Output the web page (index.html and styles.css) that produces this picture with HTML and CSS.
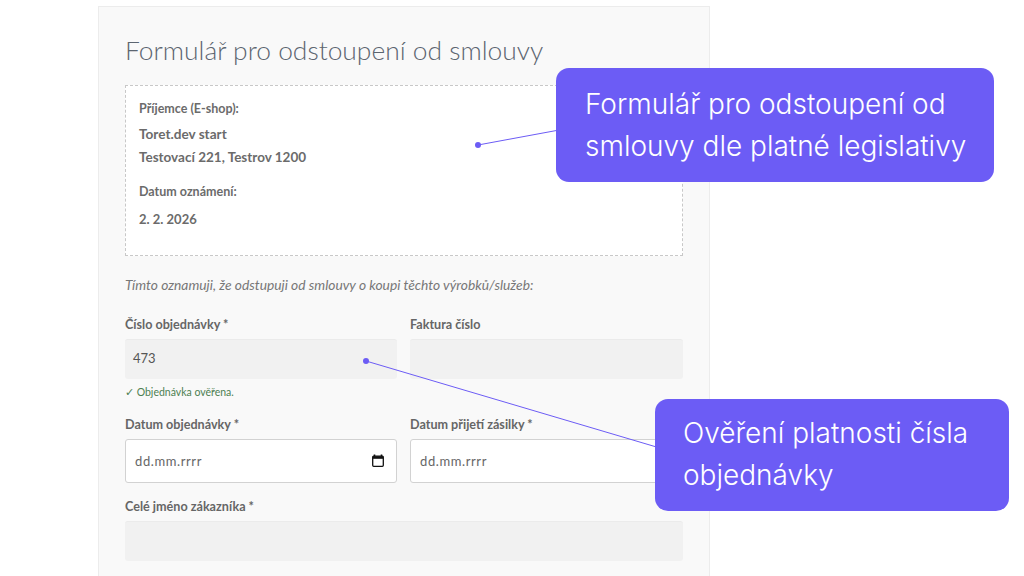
FILE: index.html
```html
<!DOCTYPE html>
<html lang="cs">
<head>
    <title>Formulář pro odstoupení od smlouvy</title>
    <meta charset="UTF-8">
    <link rel="stylesheet" href="styles.css">
</head>
<body>
<div class="form-card">
    <h1>Formulář pro odstoupení od smlouvy</h1>

    <!-- Příjemce -->
    <div class="recipient">
        <p class="recipient-label">Příjemce (E-shop):</p>
        <p class="recipient-name">Toret.dev start</p>
        <p class="recipient-address">Testovací 221, Testrov 1200</p>
        <p class="recipient-label date-label">Datum oznámení:</p>
        <p class="recipient-date">2. 2. 2026</p>
    </div>

    <p class="intro">Tímto oznamuji, že odstupuji od smlouvy o koupi těchto výrobků/služeb:</p>

    <!-- Pole formuláře -->
    <div class="form-row">
        <div class="field">
            <label>Číslo objednávky *</label>
            <div class="input readonly">473</div>
            <div class="verified">✓ Objednávka ověřena.</div>
        </div>
        <div class="field">
            <label>Faktura číslo</label>
            <div class="input readonly"></div>
        </div>
    </div>
    <div class="form-row">
        <div class="field">
            <label>Datum objednávky *</label>
            <div class="input date">
                <span>dd.mm.rrrr</span>
                <svg class="calendar" width="14" height="14" viewBox="0 0 14 14">
                    <path d="M3.5 0.5v2M10.5 0.5v2" stroke="#111" stroke-width="1.6" fill="none"/>
                    <rect x="1.7" y="2.2" width="10.6" height="10.1" rx="1" stroke="#111" stroke-width="1.3" fill="none"/>
                    <rect x="1.7" y="2.2" width="10.6" height="2.6" fill="#111"/>
                </svg>
            </div>
        </div>
        <div class="field">
            <label>Datum přijetí zásilky *</label>
            <div class="input date">
                <span>dd.mm.rrrr</span>
            </div>
        </div>
    </div>
    <div class="field">
        <label>Celé jméno zákazníka *</label>
        <div class="input readonly"></div>
    </div>
</div>

<!-- Popisky přes formulář -->
<svg class="connectors" width="1024" height="576" viewBox="0 0 1024 576">
    <line x1="478" y1="145" x2="570" y2="128" stroke="#6c5cf5" stroke-width="1"/>
    <circle cx="478" cy="145" r="3" fill="#6c5cf5"/>
    <line x1="366" y1="361" x2="670" y2="451" stroke="#6c5cf5" stroke-width="1"/>
    <circle cx="366" cy="361" r="3" fill="#6c5cf5"/>
</svg>
<div class="callout callout-legal">Formulář pro odstoupení od smlouvy dle platné legislativy</div>
<div class="callout callout-order">Ověření platnosti čísla objednávky</div>
</body>
</html>
```

FILE: styles.css
```css
html, body { height: 576px; overflow: hidden; }
body { margin: 0; background: #fff; font-family: "Lato", "Open Sans", sans-serif; color: #6d6d6d; position: relative; }
p { margin: 0; }

.form-card { width: 558px; height: 600px; margin: 6px 0 0 98px; padding: 25px 26px 0; background: #f9f9f9; border: 1px solid #ececec; }
h1 { margin: 0 0 17px; font-size: 26.4px; line-height: 36px; font-weight: 300; color: #5c6570; }

.recipient { height: 171px; box-sizing: border-box; padding: 14px 13px 0; background: #fff; border: 1px dashed #c8c8c8; font-size: 12.5px; font-weight: 700; color: #6b6b6b; }
.recipient-label { line-height: 18px; }
.recipient-name { margin-top: 7px; line-height: 18px; font-size: 13.6px; }
.recipient-address { margin-top: 5px; line-height: 18px; font-size: 13.5px; }
.date-label { margin-top: 17px; }
.recipient-date { margin-top: 9px; line-height: 18px; font-size: 13px; }

.intro { margin: 20px 0 23px; font-size: 13.8px; line-height: 18px; font-style: italic; color: #777; }

.form-row { display: grid; grid-template-columns: 272px 273px; column-gap: 13px; }
.field label { display: block; font-size: 12.6px; line-height: 16px; font-weight: 700; color: #666; }
.input { box-sizing: border-box; font-size: 13px; color: #555; }
.readonly { height: 40px; margin-top: 6px; padding: 0 8px; line-height: 37px; background: #f1f1f1; border-top: 1px solid #ebebeb; border-radius: 3px; }
.date { height: 44px; margin-top: 6px; padding: 0 10px 0 9px; display: flex; align-items: center; justify-content: space-between; background: #fff; border: 1px solid #d2d2d2; border-radius: 3px; letter-spacing: 0.6px; color: #666; }
.calendar { margin-right: 1px; }
.verified { margin-top: 6px; font-size: 10.5px; line-height: 15px; color: #4d7f52; }

.form-row + .form-row { margin-top: 17px; }
.form-row + .field { margin-top: 16px; }

.connectors { position: absolute; left: 0; top: 0; }
.callout { position: absolute; box-sizing: border-box; background: #6c5cf5; border-radius: 13px; color: #fff; font-family: "Inter", sans-serif; font-size: 28px; font-weight: 300; line-height: 42px; }
.callout-legal { left: 556px; top: 68px; width: 438px; height: 114px; padding: 15px 20px 0 29px; }
.callout-order { left: 655px; top: 399px; width: 354px; height: 112px; padding: 13px 20px 0 28px; }
```
